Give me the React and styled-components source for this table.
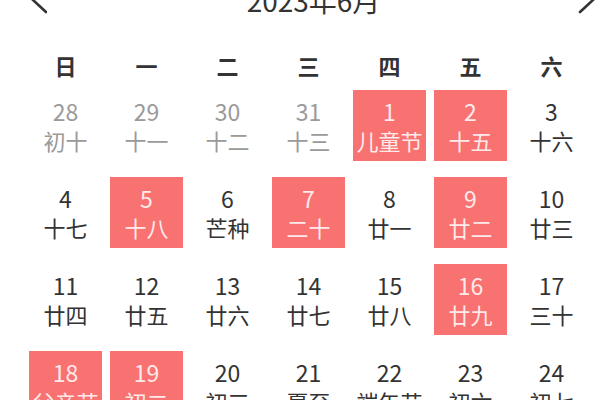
import React from "react";
import styled, { createGlobalStyle } from "styled-components";

const GlobalStyle = createGlobalStyle`
  html, body {
    margin: 0;
    padding: 0;
    background: #fff;
    overflow: hidden;
  }
  body {
    font-family: "Noto Sans CJK SC", "Noto Sans", sans-serif;
    color: #333;
  }
`;

const Root = styled.div`
  width: 559px;
  padding-left: 29px;
`;

const Header = styled.div`
  display: flex;
  align-items: center;
  justify-content: space-between;
  height: 40px;
  margin-top: -20px;
  margin-right: -8px;
`;

const Title = styled.div`
  font-size: 28px;
  line-height: 40px;
  color: #333;
  margin-left: 2px;
`;

const Arrow = styled.svg`
  width: 18px;
  height: 30px;
  display: block;
`;

const WeekRow = styled.div`
  display: grid;
  grid-template-columns: repeat(7, 73px);
  column-gap: 8px;
  margin-top: 30px;
`;

const WeekDay = styled.div`
  text-align: center;
  font-size: 22px;
  font-weight: 700;
  line-height: 30px;
  color: #333;
`;

const DayGrid = styled.div`
  display: grid;
  grid-template-columns: repeat(7, 73px);
  grid-auto-rows: 71px;
  column-gap: 8px;
  row-gap: 16px;
  margin-top: 10px;
`;

const Cell = styled.div`
  display: flex;
  flex-direction: column;
  align-items: center;
  justify-content: center;
  background: ${(p) => (p.$active ? "#f87272" : "transparent")};
  color: ${(p) => (p.$active ? "#feeaea" : p.$muted ? "#9a9a9a" : "#333")};
`;

const Num = styled.div`
  font-size: 23px;
  line-height: 29px;
`;

const Lunar = styled.div`
  font-size: 22px;
  line-height: 29px;
  white-space: nowrap;
`;

const weekDays = ["日", "一", "二", "三", "四", "五", "六"];

const days = [
  { d: 28, l: "初十", muted: true },
  { d: 29, l: "十一", muted: true },
  { d: 30, l: "十二", muted: true },
  { d: 31, l: "十三", muted: true },
  { d: 1, l: "儿童节", active: true },
  { d: 2, l: "十五", active: true },
  { d: 3, l: "十六" },
  { d: 4, l: "十七" },
  { d: 5, l: "十八", active: true },
  { d: 6, l: "芒种" },
  { d: 7, l: "二十", active: true },
  { d: 8, l: "廿一" },
  { d: 9, l: "廿二", active: true },
  { d: 10, l: "廿三" },
  { d: 11, l: "廿四" },
  { d: 12, l: "廿五" },
  { d: 13, l: "廿六" },
  { d: 14, l: "廿七" },
  { d: 15, l: "廿八" },
  { d: 16, l: "廿九", active: true },
  { d: 17, l: "三十" },
  { d: 18, l: "父亲节", active: true },
  { d: 19, l: "初二", active: true },
  { d: 20, l: "初三" },
  { d: 21, l: "夏至" },
  { d: 22, l: "端午节" },
  { d: 23, l: "初六" },
  { d: 24, l: "初七" },
  { d: 25, l: "初八" },
  { d: 26, l: "初九" },
  { d: 27, l: "初十" },
  { d: 28, l: "十一" },
  { d: 29, l: "十二" },
  { d: 30, l: "十三" },
  { d: 1, l: "建党节", muted: true },
];

export default function App() {
  return (
    <Root>
      <GlobalStyle />
      <Header>
        <Arrow viewBox="0 0 18 30">
          <path d="M17 3 L4 15 L17 27" fill="none" stroke="#333" strokeWidth="2.6" strokeLinecap="round" />
        </Arrow>
        <Title>2023年6月</Title>
        <Arrow viewBox="0 0 18 30">
          <path d="M2 3 L15 15 L2 27" fill="none" stroke="#333" strokeWidth="2.6" strokeLinecap="round" />
        </Arrow>
      </Header>
      <WeekRow>
        {weekDays.map((w) => (
          <WeekDay key={w}>{w}</WeekDay>
        ))}
      </WeekRow>
      <DayGrid>
        {days.map((day, i) => (
          <Cell key={i} $active={day.active} $muted={day.muted}>
            <Num>{day.d}</Num>
            <Lunar>{day.l}</Lunar>
          </Cell>
        ))}
      </DayGrid>
    </Root>
  );
}
